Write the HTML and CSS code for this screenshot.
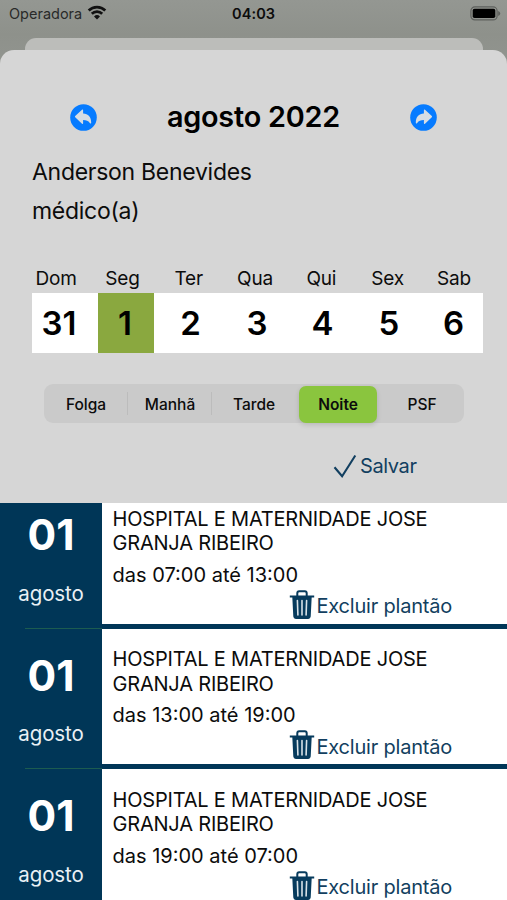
FILE: index.html
```html
<!DOCTYPE html>
<html lang="pt-BR">
<head>
<meta charset="utf-8">
<title>Plantões</title>
<link rel="stylesheet" href="styles.css">
</head>
<body>
<svg class="defs" width="0" height="0" aria-hidden="true">
  <symbol id="arrow" viewBox="0 0 27 27"><circle cx="13.5" cy="13.5" r="13.3" fill="#067bff"/><path d="M5.2 12 12 5.8c.6-.5 1.1-.3 1.1.5v3.2c5.2.2 8 3.3 8.1 9.2 0 1-.8 1.1-1.4.3-1.5-2.2-3.5-3-6.7-3v3.2c0 .8-.5 1-1.1.5L5.2 13.2q-.6-.6 0-1.2z" fill="#d6dde4"/></symbol>
  <symbol id="trash" viewBox="0 0 26 30"><path d="M8.3 6V3.2Q8.3 1.3 10.2 1.3h5.6q1.9 0 1.9 1.9V6" fill="none" stroke="#073b5d" stroke-width="2"/><path d="M.8 5.6h24.4v1.9H.8zM3.3 7h19.4l-1 19.6q-.2 2.4-2.5 2.4H6.8q-2.3 0-2.5-2.4z" fill="#073b5d"/><path d="M8.4 10.5 8.9 25M13 10.5V25M17.6 10.5 17.1 25" fill="none" stroke="#d8e2e8" stroke-width="1.6" stroke-linecap="round"/></symbol>
</svg>
<div class="phone">
  <header class="status">
    <span class="carrier">Operadora</span>
    <svg class="wifi" width="20" height="15" viewBox="0 0 20 15"><g fill="none" stroke="#111" stroke-width="2.7"><path d="M1.7 5.5a11.8 11.8 0 0 1 16.6 0"/><path d="M4.8 8.8a7.3 7.3 0 0 1 10.4 0"/></g><path d="m10 14.4-3-3a4.3 4.3 0 0 1 6 0z" fill="#111"/></svg>
    <span class="clock">04:03</span>
    <svg class="battery" width="31" height="15" viewBox="0 0 31 15"><rect x=".9" y=".9" width="26.2" height="13" rx="4" fill="none" stroke="#5e605d" stroke-width="1.2"/><rect x="2.7" y="2.7" width="22.6" height="9.4" rx="1.8"/><path d="M28.2 5v5q2-.9 2-2.5T28.2 5z" fill="#5e605d"/></svg>
  </header>
  <div class="backsheet"></div>
  <main class="sheet">
    <div class="month">
      <svg width="27" height="27"><use href="#arrow"/></svg>
      <h1>agosto 2022</h1>
      <svg class="next" width="27" height="27"><use href="#arrow"/></svg>
    </div>
    <p class="person">Anderson Benevides</p>
    <p class="person">médico(a)</p>
    <div class="weekdays"><span>Dom</span><span>Seg</span><span>Ter</span><span>Qua</span><span>Qui</span><span>Sex</span><span>Sab</span></div>
    <div class="days"><span>31</span><span class="selected">1</span><span>2</span><span>3</span><span>4</span><span>5</span><span>6</span></div>
    <div class="segments"><span>Folga</span><span class="split">Manhã</span><span class="split">Tarde</span><span class="active">Noite</span><span>PSF</span></div>
    <div class="save"><svg width="24" height="24" viewBox="0 0 24 24"><path d="m1.5 13.2 7.6 9L22.3 1.5" fill="none" stroke="#123f60" stroke-width="2.1"/></svg><span>Salvar</span></div>
  </main>
  <section class="list">
    <article class="shift">
      <div class="date"><b>01</b><span>agosto</span></div>
      <div class="info"><p class="place">HOSPITAL E MATERNIDADE JOSE<br>GRANJA RIBEIRO</p><p class="time">das 07:00 até 13:00</p><div class="remove"><svg width="26" height="30"><use href="#trash"/></svg><span>Excluir plantão</span></div></div>
    </article>
    <article class="shift">
      <div class="date"><b>01</b><span>agosto</span></div>
      <div class="info"><p class="place">HOSPITAL E MATERNIDADE JOSE<br>GRANJA RIBEIRO</p><p class="time">das 13:00 até 19:00</p><div class="remove"><svg width="26" height="30"><use href="#trash"/></svg><span>Excluir plantão</span></div></div>
    </article>
    <article class="shift">
      <div class="date"><b>01</b><span>agosto</span></div>
      <div class="info"><p class="place">HOSPITAL E MATERNIDADE JOSE<br>GRANJA RIBEIRO</p><p class="time">das 19:00 até 07:00</p><div class="remove"><svg width="26" height="30"><use href="#trash"/></svg><span>Excluir plantão</span></div></div>
    </article>
  </section>
</div>
</body>
</html>
```
FILE: styles.css
```css
* { box-sizing: border-box; }
body { margin: 0; font-family: Inter, "Liberation Sans", sans-serif; color: #0c0c0c; }
h1, p { margin: 0; }
.defs { position: absolute; }
.phone { width: 507px; height: 900px; overflow: hidden; display: flex; flex-direction: column; background: linear-gradient(#949792, #8e918b 34px, #939691 80px); }
.status { height: 38px; flex: none; display: grid; grid-template-columns: 78px 130px 1fr 31px; padding: 6px 6px 0 9px; align-items: start; }
.carrier { font-size: 14.5px; line-height: 16px; white-space: nowrap; color: #292a29; }
.wifi { margin-top: -1px; }
.clock { font-size: 14.5px; line-height: 16px; font-weight: 600; padding-left: 15px; letter-spacing: .1px; }
.backsheet { height: 12px; flex: none; margin: 0 24px 0 25px; background: #bcbdba; border-radius: 11px 11px 0 0; }
.sheet { height: 453px; flex: none; background: #d6d6d6; border-radius: 14px 14px 0 0; padding: 47px 24px 0 32px; }
.month { display: flex; align-items: center; justify-content: space-between; height: 40px; padding: 0 46px 0 38px; }
.month h1 { font-size: 28.8px; font-weight: 600; line-height: 40px; letter-spacing: -.2px; color: #000; }
.next { transform: scaleX(-1); }
.person { font-size: 23px; line-height: 39px; height: 39px; letter-spacing: -.28px; }
.month + .person { margin-top: 16px; }
.weekdays { display: grid; grid-template-columns: repeat(7, 66.3px); margin: 33px 0 0 -9px; height: 29px; line-height: 29px; font-size: 19px; text-align: center; letter-spacing: -.2px; }
.days { display: grid; grid-template-columns: 66px 56px 75px 58px 73px 60px 63px; height: 60px; background: #fff; font-size: 33px; font-weight: 600; line-height: 61px; text-align: center; color: #000; }
.days span:first-child { padding-right: 12px; }
.days span:nth-child(n+2) { padding-right: 2px; }
.days span:last-child { padding: 0 0 0 4px; }
.selected { background: #8aa83f; height: 60px; }
.segments { display: grid; grid-template-columns: repeat(5, 1fr); height: 39px; margin: 31px 19px 0 12px; background: #cacaca; border-radius: 9px; font-size: 15.5px; font-weight: 500; line-height: 41px; text-align: center; }
.split { position: relative; }
.split::before { content: ""; position: absolute; left: -1px; top: 8px; width: 1px; height: 23px; background: #bcbcbc; }
.active { background: #8ac53e; border-radius: 7px; margin: 2px 3px; line-height: 37px; font-weight: 600; box-shadow: 0 2px 5px #0002; }
.save { display: flex; align-items: center; height: 30px; margin: 28px 0 0 301px; gap: 3px; font-size: 20px; letter-spacing: -.4px; color: #123f60; }
.list { flex: none; height: 397px; overflow: hidden; background: #fff; }
.shift { height: 140.5px; display: grid; grid-template-columns: 102px 1fr; border-bottom: 5px solid #003657; position: relative; }
.shift:first-child { margin-top: -14.6px; }
.shift::after { content: ""; position: absolute; left: 25px; width: 77px; bottom: -5px; height: 1px; background: #1c5c50; }
.date { background: #003657; color: #fff; display: flex; flex-direction: column; align-items: center; }
.date b { font-size: 42.5px; line-height: 50px; margin-top: 22px; font-weight: 700; }
.date span { font-size: 20.5px; line-height: 30px; margin-top: 18.5px; letter-spacing: -.1px; color: #e9f0f5; }
.info { padding: 18.5px 0 0 10.5px; font-size: 20px; line-height: 24.5px; white-space: nowrap; }
.place { letter-spacing: -.2px; }
.time { margin-top: 7px; }
.remove { display: flex; align-items: center; gap: 2px; margin: 4px 0 0 176px; height: 30px; letter-spacing: -.2px; color: #123f60; }
.remove svg { margin-top: -3px; }
```
